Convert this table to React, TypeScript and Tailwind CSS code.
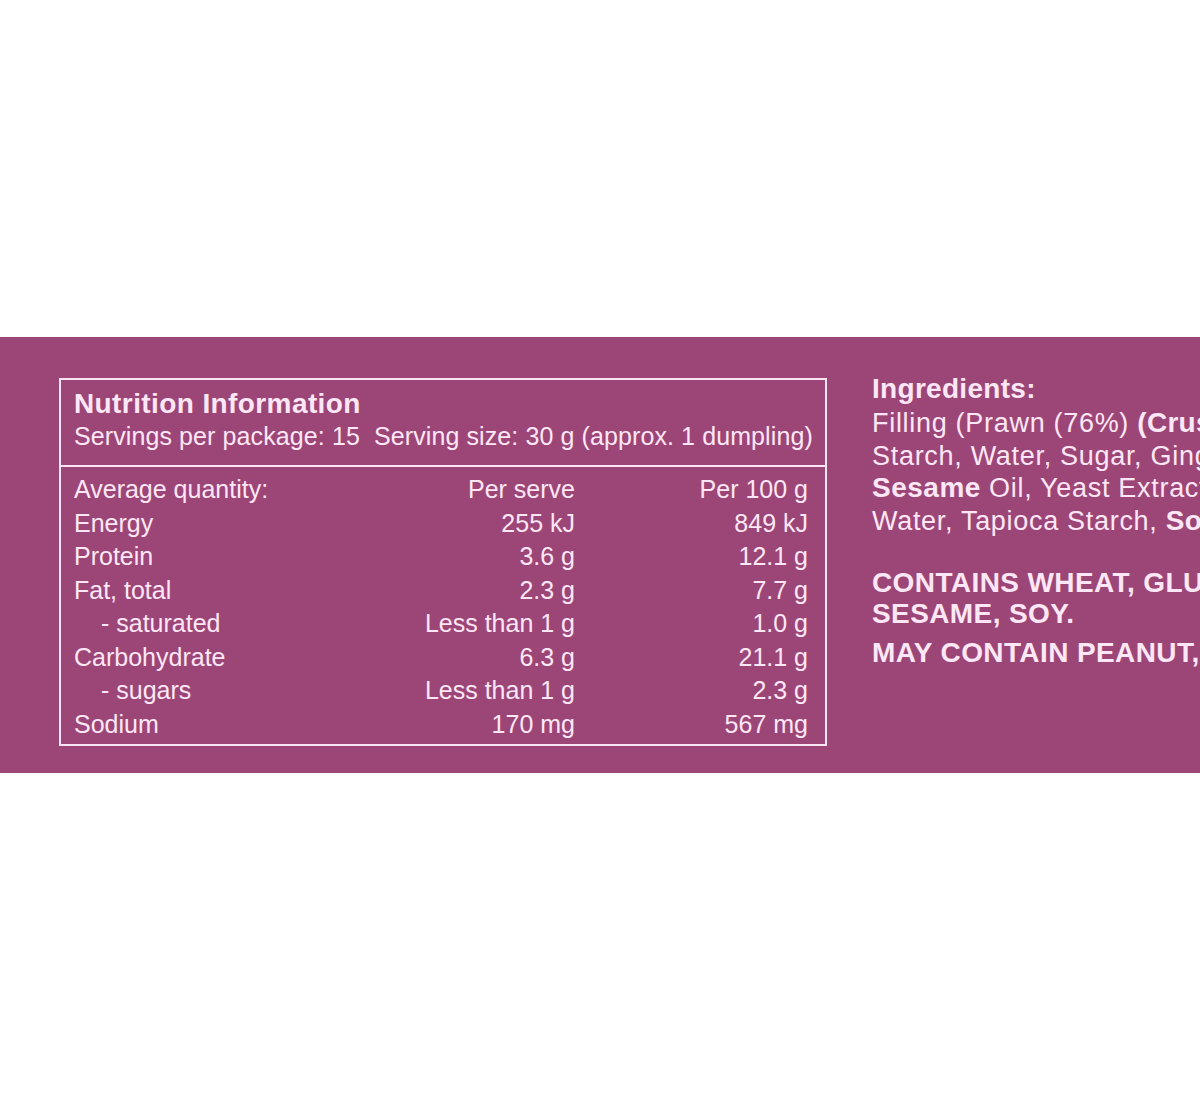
const rows: [string, string, string, boolean?][] = [
  ["Energy", "255 kJ", "849 kJ"],
  ["Protein", "3.6 g", "12.1 g"],
  ["Fat, total", "2.3 g", "7.7 g"],
  ["- saturated", "Less than 1 g", "1.0 g", true],
  ["Carbohydrate", "6.3 g", "21.1 g"],
  ["- sugars", "Less than 1 g", "2.3 g", true],
  ["Sodium", "170 mg", "567 mg"],
];

function Row({ label, serve, per100, sub }: { label: string; serve: string; per100: string; sub?: boolean }) {
  return (
    <div className="grid h-[33.5px] grid-cols-[1fr_157px_233px] items-center">
      <span className={sub ? "pl-[27px]" : ""}>{label}</span>
      <span className="text-right">{serve}</span>
      <span className="text-right">{per100}</span>
    </div>
  );
}

export default function App() {
  return (
    <div className="flex h-[1117px] w-[1200px] flex-col bg-white font-['Liberation_Sans',Arial,sans-serif] text-[#fde7f6]">
      <div className="h-[337px]" />
      <div className="flex h-[436px] overflow-hidden bg-[#9c4677] pl-[59px] pt-[41px]">
        <div className="h-[368px] w-[768px] shrink-0 border-2 border-[#fbe4f4]">
          <div className="border-b-2 border-[#fbe4f4] pb-[13px] pl-[13px] pt-[8px]">
            <h1 className="text-[28px] font-bold leading-[32px] tracking-[0.4px]">Nutrition Information</h1>
            <p className="whitespace-nowrap text-[25px] leading-[32px] tracking-[0.1px]">
              Servings per package: 15&nbsp;&nbsp;Serving size: 30 g (approx. 1 dumpling)
            </p>
          </div>
          <div className="pl-[13px] pr-[17px] pt-[6px] text-[25px] leading-[33px]">
            <Row label="Average quantity:" serve="Per serve" per100="Per 100 g" />
            {rows.map(([label, serve, per100, sub]) => (
              <Row key={label} label={label} serve={serve} per100={per100} sub={sub} />
            ))}
          </div>
        </div>
        <div className="ml-[45px] mt-[-7px] shrink-0 whitespace-nowrap text-[27px] leading-[32.5px] tracking-[0.7px]">
          <h2 className="text-[28px] font-bold leading-[36px] tracking-[0.3px]">Ingredients:</h2>
          <p>
            Filling (Prawn (76%) <b className="text-[28px] tracking-[0.3px]">(Crustacean)</b>, Wheat
          </p>
          <p>Starch, Water, Sugar, Ginger, Salt, Vegetable</p>
          <p>
            <b className="text-[28px] tracking-[0.5px]">Sesame</b> Oil, Yeast Extract), Pastry (Wheat Flour,
          </p>
          <p>
            Water, Tapioca Starch, <b className="text-[28px] tracking-[0.3px]">Soy</b> Bean Oil).
          </p>
          <div className="mt-[30px] text-[28px] font-bold leading-[31px] tracking-[0.4px]">
            <p>CONTAINS WHEAT, GLUTEN, CRUSTACEAN,</p>
            <p>SESAME, SOY.</p>
            <p className="mt-[8px]">MAY CONTAIN PEANUT, TREE NUTS.</p>
          </div>
        </div>
      </div>
      <div className="flex-1" />
    </div>
  );
}
